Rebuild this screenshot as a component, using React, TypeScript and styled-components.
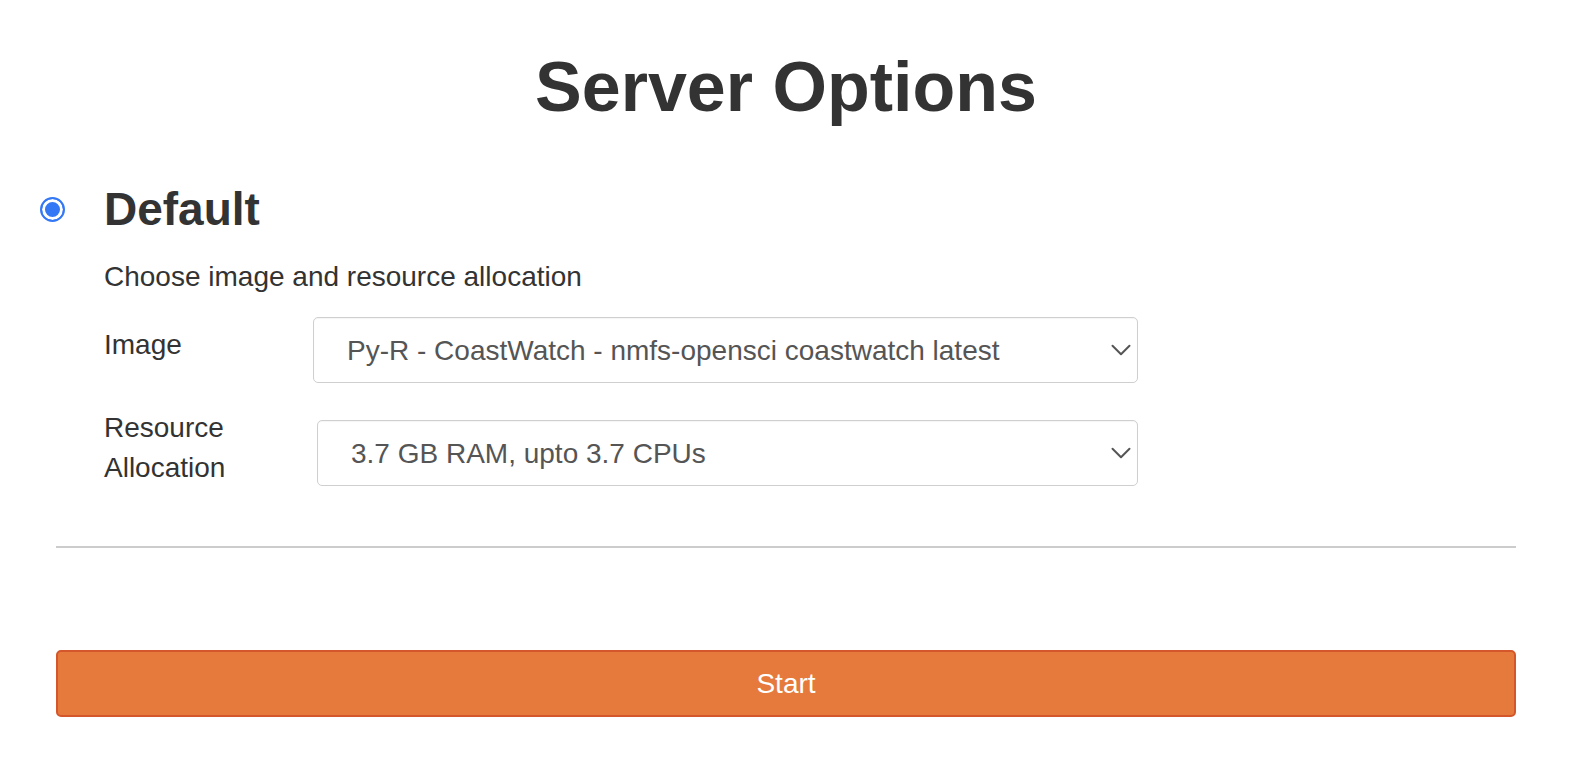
import { useState } from "react";
import styled, { createGlobalStyle } from "styled-components";
import { ChevronDown } from "lucide-react";

const GlobalStyle = createGlobalStyle`
  html, body {
    margin: 0;
    padding: 0;
    background: #fff;
  }

  body {
    font-family: "Liberation Sans", Arial, Helvetica, sans-serif;
    font-size: 28px;
    line-height: 40px;
    color: #333;
  }
`;

const Page = styled.form`
  width: 1574px;
  box-sizing: border-box;
  padding: 52px 42px 0 40px;
`;

const Title = styled.h1`
  margin: 0 0 64px;
  font-size: 70px;
  line-height: 70px;
  font-weight: 700;
  text-align: center;
  color: #333;
`;

const OptionHeader = styled.label`
  display: flex;
  align-items: center;
  gap: 39px;
  cursor: pointer;
`;

const Radio = styled.input`
  appearance: none;
  margin: 0;
  width: 25px;
  height: 25px;
  flex: 0 0 25px;
  border-radius: 50%;
  border: 2px solid #3478f6;
  box-sizing: border-box;
  background: #fff;

  &:checked {
    background: #3478f6;
    box-shadow: inset 0 0 0 3px #fff;
  }
`;

const OptionTitle = styled.h3`
  margin: 0;
  font-size: 46px;
  line-height: 46px;
  font-weight: 700;
  color: #333;
`;

const OptionBody = styled.div`
  padding-left: 64px;
`;

const Description = styled.p`
  margin: 25px 0 20px;
`;

const FieldRow = styled.div<{ $labelWidth: number; $gap: number }>`
  display: flex;
  align-items: center;
  width: 1034px;
  margin-bottom: ${(p) => p.$gap}px;

  & > label {
    flex: 0 0 ${(p) => p.$labelWidth}px;
  }
`;

const FieldLabel = styled.label`
  padding-bottom: 10px;
  color: #333;
`;

const SelectWrap = styled.div`
  position: relative;
  flex: 1;
`;

const Select = styled.select`
  appearance: none;
  width: 100%;
  height: 66px;
  box-sizing: border-box;
  padding: 0 60px 0 33px;
  border: 1.5px solid #cfcfcf;
  border-radius: 5px;
  background: #fff;
  box-shadow: inset 0 1px 1px rgba(0, 0, 0, 0.04);
  font-family: inherit;
  font-size: 28px;
  color: #555;
  outline: none;
`;

const Chevron = styled(ChevronDown)`
  position: absolute;
  right: 0;
  top: 50%;
  transform: translateY(-50%);
  pointer-events: none;
  color: #555;
`;

const Footer = styled.div`
  padding: 0 16px;
`;

const Divider = styled.hr`
  margin: 0 0 102px;
  border: 0;
  border-top: 2px solid #cccccc;
`;

const StartButton = styled.button`
  display: block;
  width: 100%;
  height: 67px;
  border: 2px solid #d4562b;
  border-radius: 5px;
  background: #e57a3c;
  color: #fff;
  font-family: inherit;
  font-size: 28px;
  cursor: pointer;
`;

const images = [
  "Py-R - CoastWatch - nmfs-opensci coastwatch latest",
  "Python - Default - jupyter scipy-notebook",
];

const resources = ["3.7 GB RAM, upto 3.7 CPUs", "7.4 GB RAM, upto 3.7 CPUs"];

function App() {
  const [image, setImage] = useState(images[0]);
  const [resource, setResource] = useState(resources[0]);

  return (
    <>
      <GlobalStyle />
      <Page onSubmit={(e) => e.preventDefault()}>
        <Title>Server Options</Title>

        <OptionHeader>
          <Radio type="radio" name="profile" defaultChecked />
          <OptionTitle>Default</OptionTitle>
        </OptionHeader>

        <OptionBody>
          <Description>Choose image and resource allocation</Description>

          <FieldRow $labelWidth={209} $gap={25}>
            <FieldLabel htmlFor="image">Image</FieldLabel>
            <SelectWrap>
              <Select
                id="image"
                value={image}
                onChange={(e) => setImage(e.target.value)}
              >
                {images.map((item) => (
                  <option key={item}>{item}</option>
                ))}
              </Select>
              <Chevron size={34} strokeWidth={1.4} />
            </SelectWrap>
          </FieldRow>

          <FieldRow $labelWidth={213} $gap={48}>
            <FieldLabel htmlFor="resource">Resource Allocation</FieldLabel>
            <SelectWrap>
              <Select
                id="resource"
                value={resource}
                onChange={(e) => setResource(e.target.value)}
              >
                {resources.map((item) => (
                  <option key={item}>{item}</option>
                ))}
              </Select>
              <Chevron size={34} strokeWidth={1.4} />
            </SelectWrap>
          </FieldRow>
        </OptionBody>

        <Footer>
          <Divider />
          <StartButton type="submit">Start</StartButton>
        </Footer>
      </Page>
    </>
  );
}

export default App;
